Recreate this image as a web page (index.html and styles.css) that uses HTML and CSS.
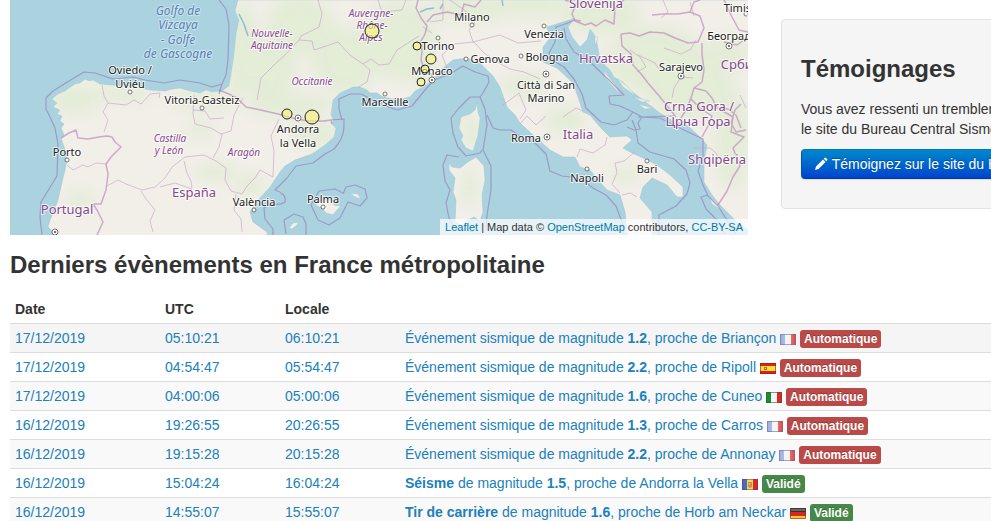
FILE: index.html
```html
<!DOCTYPE html>
<html lang="fr">
<head>
<meta charset="utf-8">
<title>Derniers évènements en France métropolitaine</title>
<link rel="stylesheet" href="styles.css">
</head>
<body>
<svg class="defs" aria-hidden="true">
  <defs>
    <linearGradient id="gloss" x1="0" y1="0" x2="1" y2="0"><stop offset="0" stop-color="#fff" stop-opacity=".1"/><stop offset=".5" stop-color="#fff" stop-opacity=".35"/><stop offset="1" stop-color="#fff" stop-opacity="0"/></linearGradient>
    <symbol id="fr" viewBox="0 0 16 11"><path fill="#8fa5dc" d="M0 0h6v11H0z"/><path fill="#f0f0f0" d="M5 0h6v11H5z"/><path fill="#e2453f" d="M11 0h5v11h-5z"/><path fill="url(#gloss)" d="M0 0h16v11H0z"/><path fill="none" stroke="#6a6f98" stroke-opacity=".6" d="M.5.5h15v10H.5z"/></symbol>
    <symbol id="es" viewBox="0 0 16 11"><path fill="#d8231c" d="M0 0h16v11H0z"/><path fill="#fbe235" d="M0 3h16v5H0z"/><path fill="#c8682e" d="M4 4h3v3H4z"/><path fill="#f5d9a0" d="M5 5h1v1H5z"/><path fill="none" stroke="#a51612" stroke-opacity=".6" d="M.5.5h15v10H.5z"/></symbol>
    <symbol id="it" viewBox="0 0 16 11"><path fill="#149032" d="M0 0h6v11H0z"/><path fill="#f6f6f6" d="M5 0h6v11H5z"/><path fill="#e22424" d="M11 0h5v11h-5z"/><path fill="none" stroke="#3a5a35" stroke-opacity=".6" d="M.5.5h15v10H.5z"/></symbol>
    <symbol id="ad" viewBox="0 0 16 11"><path fill="#4c69c4" d="M0 0h6v11H0z"/><path fill="#f5da45" d="M5 0h6v11H5z"/><path fill="#dc2430" d="M11 0h5v11h-5z"/><path fill="#c98f4e" d="M6 3h4v5l-2 1-2-1z"/><path fill="#e9c089" d="M7 4h1v2H7z"/><path fill="none" stroke="#59406a" stroke-opacity=".5" d="M.5.5h15v10H.5z"/></symbol>
    <symbol id="de" viewBox="0 0 16 11"><path fill="#333" d="M0 0h16v4H0z"/><path fill="#d9291f" d="M0 4h16v4H0z"/><path fill="#f6ca35" d="M0 8h16v3H0z"/><path fill="#fff" fill-opacity=".25" d="M1 1h14v2H1z"/><path fill="none" stroke="#6b3524" stroke-opacity=".6" d="M.5.5h15v10H.5z"/></symbol>
  </defs>
</svg>
<div class="page">
  <div class="top">
    <div class="map">
      <svg class="map-view" viewBox="10 0 738 235" role="img" aria-label="Carte des séismes">
        <defs>
          <path id="land" d="M238 0L235 11L239 20L236 35L234 55L231 75L229 86L222 91L212 92L206 90L200 93L190 91L180 88L172 89L165 91L150 90L140 88L130 86L110 85L100 84L93 80L89 81L85 79L80 83L75 84L65 91L58 94L52 99L57 103L53 107L60 110L57 114L62 116L60 121L64 124L61 128L64 135L61 138L65 150L67 158L65 170L62 182L58 200L53 213L50 220L48 227L52 231L54 240H268L267 232L253 222L250 212L258 200L270 187L280 172L285 166L295 160L312 154L325 145L334 137L336 128L331 123L334 121L331 115L333 100L340 93L353 87L360 87L367 90L370 93L377 93L383 97L397 100L410 97L415 91L423 87L433 80L443 68L453 60L467 58L480 63L493 76L500 87L507 107L515 115L520 123L533 135L550 150L563 157L575 157L580 167L590 170L598 180L607 190L620 195L625 212L628 240H652V212L640 198L643 187L652 178L667 185L677 197L683 197V187L670 175L657 165L643 158L630 152L623 148L632 140L627 136L610 137L600 127L590 115L583 112L578 97L573 83L557 68L543 62V47L550 38L547 27L563 22L575 18L568 27L572 37L580 47L587 40L590 29L594 34L597 43L600 60L610 70L614 77L623 82L630 90L643 100L660 113L673 121L687 125L700 137L707 145L704 162V182L712 195L720 205L730 215L740 225L749 230V0Z"/>
          <path id="isles" d="M477 103L478 112L480 118L478 135L473 151L466 148L461 140L463 136L459 128L461 117L470 114L475 110ZM476 157L484 166L485 180L482 195L483 212L480 221L474 217L468 220L463 226L455 222L456 200L453 192L455 178L449 170V163L452 167L460 168L468 162ZM315 205L325 199L333 200L334 205L341 206L336 211L333 215L326 213L322 208ZM350 193L358 194L361 199L355 197ZM289 228L293 223L299 222L296 226L292 229ZM595 36L598 38L595 46ZM603 70L616 86L620 94L606 79ZM617 78L628 87L636 96L623 87ZM633 97L650 101L642 102ZM638 104L653 108L645 109ZM709 197L716 202L722 211L712 204Z"/>
          <clipPath id="shore"><use href="#land"/><use href="#isles"/></clipPath>
          <filter id="soft" x="-20%" y="-20%" width="140%" height="140%"><feGaussianBlur stdDeviation="7"/></filter>
        </defs>
        <path class="sea" d="M10 0h738v235H10z"/>
        <use class="land" href="#land"/><use class="land" href="#isles"/>
        <g clip-path="url(#shore)">
          <g class="woods" filter="url(#soft)">
            <ellipse cx="75" cy="100" rx="24" ry="14"/><ellipse cx="120" cy="94" rx="34" ry="8"/><ellipse cx="205" cy="100" rx="36" ry="10"/><ellipse cx="200" cy="130" rx="14" ry="8"/><ellipse cx="242" cy="50" rx="18" ry="46"/><ellipse cx="270" cy="68" rx="28" ry="30"/><ellipse cx="290" cy="105" rx="46" ry="12"/><ellipse cx="300" cy="25" rx="34" ry="30"/><ellipse cx="345" cy="60" rx="34" ry="34"/><ellipse cx="398" cy="40" rx="38" ry="40"/><ellipse cx="425" cy="75" rx="20" ry="12"/><ellipse cx="470" cy="8" rx="46" ry="14"/><ellipse cx="530" cy="5" rx="36" ry="12"/><ellipse cx="525" cy="86" rx="24" ry="12"/><ellipse cx="565" cy="120" rx="20" ry="14"/><ellipse cx="600" cy="14" rx="40" ry="20"/><ellipse cx="655" cy="60" rx="50" ry="34"/><ellipse cx="690" cy="90" rx="45" ry="30"/><ellipse cx="732" cy="140" rx="18" ry="50"/><ellipse cx="725" cy="55" rx="26" ry="18"/><ellipse cx="315" cy="134" rx="25" ry="13"/><ellipse cx="215" cy="172" rx="22" ry="9"/><ellipse cx="250" cy="185" rx="14" ry="12"/><ellipse cx="80" cy="200" rx="14" ry="10"/><ellipse cx="470" cy="130" rx="9" ry="20"/><ellipse cx="470" cy="188" rx="8" ry="18"/><ellipse cx="625" cy="175" rx="14" ry="8"/>
          </g>
        </g>
        <path class="river" d="M239 14L244 24L248 36M420 12L427 9L434 8M440 9L443 4M502 0L503 6"/>
        <g class="region">
          <path d="M102 85L104 96L108 103L103 112L108 120L104 132M108 103L126 105L134 100L141 104L150 94L160 93L159 98M194 95L193 114L195 124L211 128L221 134L231 131L234 115L243 98M193 110L205 111L210 119L224 118M67 165L73 170L83 165L88 167L96 163L106 164M107 186L118 180L126 184L142 190L155 187L165 178L172 167L185 157L204 155L216 161L226 168L225 180L231 191L242 194L247 186M184 161L187 173L191 181L192 188M141 191L146 199L155 210L150 221L153 232M160 187L175 183L192 189M222 134L219 147L213 158M247 186L255 178L260 170L273 177M236 194L234 210L241 219L242 232M257 100L261 78L274 65L285 55L299 40L312 41L314 50L329 45L338 42L350 55L363 64M318 0L322 14L319 27L301 36L299 40M363 64L371 59L379 65L389 64L397 50L411 41L419 36M363 64L370 70L367 82L357 88M378 0L382 12L402 10L406 0M273 177L274 151L271 136L279 119M430 22L443 20V0M423 27L432 33M450 0L467 12L475 22L469 30L473 42L500 35L518 43L541 41M447 68L442 55L454 44L474 42M474 42L484 53L497 62L510 69L524 72L540 79M520 124L527 116L536 125L546 116M563 117L576 108L583 111M577 157L580 149L593 153L605 145L607 137M615 163L624 161L635 152M615 163L617 173L612 184L620 193M637 197L630 193L622 195M503 105L519 93L526 110L520 119M663 0L668 12L661 18M630 50L640 57L646 67L637 72M638 55L655 63L661 72M681 77L674 88L672 98M681 77L693 78M696 40L691 49L681 54L664 48M690 2L694 16M694 148L710 148L717 154L717 165M740 95L746 108"/>
        </g>
        <g class="state">
          <path d="M219 90L229 94L237 98L246 107L256 109L278 114L292 118L308 121L324 121L331 120L332 124M61 138L69 133L76 130L78 138L88 139L99 137L107 136L112 137L115 142L121 147L111 157L106 164L108 174L106 190L101 204H93L97 210L103 222L97 235M418 0L416 8L421 18L427 26L425 34L421 41L422 52L421 60L424 68L431 74L434 80M427 22L433 15L447 12L461 15L464 4L475 7L481 0M565 0L576 4L572 14L575 21L585 25L591 23L596 26L605 20L614 24L615 8L624 0M652 15L664 14L678 14L690 12L694 2L700 0M621 34L630 33L639 36L650 32L664 33L675 38L688 43L698 42L704 28L700 16L690 12M621 34L622 46L631 54L633 65L642 75L648 83L660 97L676 117M702 43L702 54L704 70L702 82L694 88L691 98L686 110L681 118M694 88L706 91L712 98L717 108L728 109L736 115L741 128M690 98L700 108L712 116L708 126L702 137M721 110L733 117L731 132L744 137L733 148L740 166L733 177L727 191L718 205M741 104L735 110L731 123L736 132L746 130M724 0L732 17L739 30L748 32M724 42L737 45L747 38M575 20L581 21"/>
        </g>
        <g class="maritime">
          <path d="M219 0L226 9L229 25L228 60L226 75L222 84L212 87L200 83L180 80L164 83L145 80L133 77L113 79L95 73L84 72L69 81L53 91L46 98L46 109L49 115L55 128L58 144L57 176L41 202L40 217L42 235M222 84L219 94M331 120L344 119V126Q344 138 334 149L325 154L313 163L296 166L287 178L275 190Q287 194 285 202Q280 206 273 203L264 208L265 219L273 229V235M342 120L339 109L339 99L350 94L361 94L383 105L397 110L412 106L425 90L434 80L450 74L463 66L475 72L488 76L489 82L483 93L480 97L485 109L487 125L483 150L491 166L491 190L487 215L486 230M481 97L470 97L459 108L451 118L453 133L458 147L466 156L480 153L482 150M459 157L447 155L443 165L445 181L450 190L446 203L449 218L454 228L474 232M487 115L493 128L500 130L511 130L524 139L535 143L546 154L550 171L562 176L580 178L593 188L606 195L616 206L622 222L624 235M343 193L335 189L319 191L311 205L318 220L329 225L340 218L348 202L360 206L367 198L365 189L355 185L346 187L343 194M286 234L284 220L294 214L303 217L306 224V235M575 20L565 24L556 27L555 42L549 53L552 60L564 67L574 79L582 94L586 108L601 122L614 125L627 120L633 112L620 106L610 104L609 96L624 95L611 82L589 61L574 52L566 39L564 28M633 112L642 117L638 123L640 129L634 130L627 127M640 117L674 116M632 120L636 130L638 143L650 152L674 159L686 170L690 183L687 194L676 206L659 215V235M638 117L660 118L684 130L703 139V156L698 171L703 185L708 196L718 206L736 234M708 195L701 197L706 209L719 222L725 234"/>
        </g>
        <g class="place">
          <circle cx="130" cy="92" r="2"/><circle cx="202" cy="108" r="2"/><circle cx="67" cy="160" r="2"/><circle cx="385" cy="94" r="2"/><circle cx="438" cy="38" r="2"/><circle cx="472" cy="25" r="2"/><circle cx="466" cy="59" r="2"/><circle cx="521" cy="56" r="2"/><circle cx="544" cy="26" r="2"/><circle cx="587" cy="169" r="2"/><circle cx="647" cy="161" r="2"/><circle cx="254" cy="210" r="2"/><circle cx="323" cy="207" r="2"/><circle cx="746" cy="14" r="2"/>
          <circle cx="55" cy="232" r="3"/><circle cx="298" cy="118" r="3"/><circle cx="432" cy="80" r="3"/><circle cx="546" cy="74" r="3"/><circle cx="547" cy="137" r="3"/><circle cx="681" cy="76" r="3"/><circle cx="729" cy="46" r="3"/>
        </g>
        <g class="place-dot"><circle cx="55" cy="232" r="1"/><circle cx="298" cy="118" r="1"/><circle cx="432" cy="80" r="1"/><circle cx="546" cy="74" r="1"/><circle cx="547" cy="137" r="1"/><circle cx="681" cy="76" r="1"/><circle cx="729" cy="46" r="1"/></g>
        <g class="label water">
          <text x="178" y="15">Golfo de</text><text x="178" y="29">Vizcaya</text><text x="178" y="44">- Golfe</text><text x="178" y="58">de Gascogne</text>
        </g>
        <g class="label area">
          <text x="272" y="37">Nouvelle-</text><text x="272" y="49">Aquitaine</text><text x="371" y="17">Auvergne-</text><text x="372" y="29">Rhône-</text><text x="371" y="41">Alpes</text><text x="312" y="85">Occitanie</text><text x="170" y="142">Castilla</text><text x="169" y="154">y León</text><text x="244" y="156">Aragón</text>
        </g>
        <g class="label country">
          <text x="596" y="8">Slovenija</text><text x="606" y="63">Hrvatska</text><text x="742" y="69">Србија</text><text x="699" y="111">Crna Gora /</text><text x="698" y="126">Црна Гора</text><text x="717" y="164">Shqipëria</text><text x="578" y="139">Italia</text><text x="194" y="197">España</text><text x="67" y="214">Portugal</text>
        </g>
        <g class="label city">
          <text x="130" y="74">Oviedo /</text><text x="130" y="88">Uviéu</text><text x="202" y="104">Vitoria-Gasteiz</text><text x="67" y="156">Porto</text><text x="298" y="133">Andorra</text><text x="298" y="147">la Vella</text><text x="254" y="206">València</text><text x="323" y="203">Palma</text><text x="385" y="106">Marseille</text><text x="432" y="75">Monaco</text><text x="438" y="50">Torino</text><text x="472" y="21">Milano</text><text x="490" y="63">Genova</text><text x="544" y="38">Venezia</text><text x="547" y="61">Bologna</text><text x="546" y="89">Città di San</text><text x="546" y="102">Marino</text><text x="526" y="142">Roma</text><text x="587" y="182">Napoli</text><text x="647" y="173">Bari</text><text x="681" y="71">Sarajevo</text><text x="729" y="40">Београд</text><text x="749" y="12">Timișoara</text>
        </g>
        <g class="quake">
          <circle cx="372" cy="31" r="7"/><circle cx="417" cy="46" r="4"/><circle cx="431" cy="59" r="5"/><circle cx="425" cy="69" r="4"/><circle cx="421" cy="82" r="4"/><circle cx="287" cy="114" r="5"/><circle cx="312" cy="117" r="7"/>
        </g>
      </svg>
      <div class="credit"><a href="#">Leaflet</a> | Map data © <a href="#">OpenStreetMap</a> contributors, <a href="#">CC-BY-SA</a></div>
    </div>
    <aside class="well">
      <h3>Témoignages</h3>
      <p>Vous avez ressenti un tremblement de terre ?<br>le site du Bureau Central Sismologique Français</p>
      <a class="btn" href="#"><svg class="pencil" viewBox="0 0 14 14" aria-hidden="true"><path d="M1 13L2 9.500L9 2.500L11.500 5L4.500 12ZM9.800 1.700L10.700.8Q11.300.3 11.900.9L13.100 2.100Q13.700 2.700 13.100 3.300L12.300 4.200Z"/></svg> Témoignez sur le site du BCSF</a>
    </aside>
  </div>
  <h3>Derniers évènements en France métropolitaine</h3>
  <table>
    <colgroup><col class="c-date"><col class="c-time"><col class="c-time"><col></colgroup>
    <thead><tr><th>Date</th><th>UTC</th><th>Locale</th><th></th></tr></thead>
    <tbody>
      <tr class="active"><td><a href="#">17/12/2019</a></td><td><a href="#">05:10:21</a></td><td><a href="#">06:10:21</a></td><td><a href="#">Événement sismique de magnitude <b>1.2</b>, proche de Briançon</a> <svg class="flag"><use href="#fr"/></svg> <span class="tag auto">Automatique</span></td></tr>
      <tr><td><a href="#">17/12/2019</a></td><td><a href="#">04:54:47</a></td><td><a href="#">05:54:47</a></td><td><a href="#">Événement sismique de magnitude <b>2.2</b>, proche de Ripoll</a> <svg class="flag"><use href="#es"/></svg> <span class="tag auto">Automatique</span></td></tr>
      <tr><td><a href="#">17/12/2019</a></td><td><a href="#">04:00:06</a></td><td><a href="#">05:00:06</a></td><td><a href="#">Événement sismique de magnitude <b>1.6</b>, proche de Cuneo</a> <svg class="flag"><use href="#it"/></svg> <span class="tag auto">Automatique</span></td></tr>
      <tr><td><a href="#">16/12/2019</a></td><td><a href="#">19:26:55</a></td><td><a href="#">20:26:55</a></td><td><a href="#">Événement sismique de magnitude <b>1.3</b>, proche de Carros</a> <svg class="flag"><use href="#fr"/></svg> <span class="tag auto">Automatique</span></td></tr>
      <tr><td><a href="#">16/12/2019</a></td><td><a href="#">19:15:28</a></td><td><a href="#">20:15:28</a></td><td><a href="#">Événement sismique de magnitude <b>2.2</b>, proche de Annonay</a> <svg class="flag"><use href="#fr"/></svg> <span class="tag auto">Automatique</span></td></tr>
      <tr><td><a href="#">16/12/2019</a></td><td><a href="#">15:04:24</a></td><td><a href="#">16:04:24</a></td><td><a href="#"><b>Séisme</b> de magnitude <b>1.5</b>, proche de Andorra la Vella</a> <svg class="flag"><use href="#ad"/></svg> <span class="tag valid">Validé</span></td></tr>
      <tr><td><a href="#">16/12/2019</a></td><td><a href="#">14:55:07</a></td><td><a href="#">15:55:07</a></td><td><a href="#"><b>Tir de carrière</b> de magnitude <b>1.6</b>, proche de Horb am Neckar</a> <svg class="flag"><use href="#de"/></svg> <span class="tag valid">Validé</span></td></tr>
    </tbody>
  </table>
</div>
</body>
</html>
```
FILE: styles.css
```css
html { overflow-x: hidden; }
body {
  margin: 0;
  background: #fff;
  color: #333;
  font: 14px/20px "Liberation Sans", Arial, sans-serif;
}
a { color: #2080bb; text-decoration: none; }
.defs { position: absolute; width: 0; height: 0; }
.page { min-width: 1140px; padding: 0 10px; }
.top {
  display: grid;
  grid-template-columns: 2fr 1fr;
  gap: 33px;
  align-items: start;
}
h3 { margin: 10px 0; font-size: 24px; line-height: 40px; }
p { margin: 0 0 10px; }

/* Map */
.map { position: relative; }
.map-view { display: block; width: 100%; }
.sea { fill: #aad3df; }
.land { fill: #f2efe9; stroke: #9fc3d0; stroke-width: .5; }
.woods { fill: #dcebcd; opacity: .65; }
.river { fill: none; stroke: #8fbadb; stroke-width: 1.5; }
.region, .state, .maritime { fill: none; stroke-linejoin: round; }
.region { stroke: #c9a3c9; stroke-opacity: .65; stroke-width: 1; }
.state { stroke: #c093c2; stroke-opacity: .75; stroke-width: 1.5; }
.maritime { stroke: #9a86bf; stroke-opacity: .75; stroke-width: 1.2; }
.place { fill: #fff; stroke: #555; stroke-width: .8; }
.place-dot { fill: #444; }
.label {
  font-family: "Noto Sans", sans-serif;
  text-anchor: middle;
  paint-order: stroke;
  stroke: #fff;
  stroke-opacity: .75;
  stroke-width: 2px;
  stroke-linejoin: round;
}
.city { font-size: 11px; fill: #222; }
.water { font-size: 12px; font-style: italic; fill: #5a7fb5; stroke-opacity: .4; }
.area { font-size: 10px; font-style: italic; fill: #88498f; }
.country { font-size: 13px; fill: #84478c; }
.quake { fill: #f8f470; fill-opacity: .55; stroke: #222; stroke-width: 1; }
.credit {
  position: absolute;
  right: 0;
  bottom: 0;
  padding: 0 5px;
  background: rgba(255, 255, 255, .7);
  font-size: 11px;
  line-height: 16px;
}
.credit a { color: #0078a8; }

/* Side panel */
.well {
  margin-top: 19px;
  padding: 19px 19px 29px;
  border: 1px solid #e3e3e3;
  border-radius: 4px;
  background: #f5f5f5;
  white-space: nowrap;
}
.btn {
  display: inline-block;
  box-sizing: border-box;
  height: 30px;
  padding: 4px 12px;
  border: 1px solid #0057b8;
  border-color: #0074bd #0052b5 #003a9e;
  border-radius: 4px;
  background: linear-gradient(#08c, #04c);
  box-shadow: 0 1px 2px rgba(0, 0, 0, .1);
  color: #fff;
  text-shadow: 0 -1px 0 rgba(0, 0, 0, .25);
  vertical-align: top;
}
.pencil { width: 14px; height: 14px; fill: #fff; vertical-align: -2px; }

/* Events */
table { width: 100%; border-collapse: collapse; table-layout: fixed; }
.c-date { width: 150px; }
.c-time { width: 120px; }
th, td { padding: 4px 5px; text-align: left; }
td { border-top: 1px solid #ddd; white-space: nowrap; }
tbody tr:nth-child(odd) { background: #f9f9f9; }
tbody tr.active { background: #f5f5f5; }
.flag { width: 16px; height: 11px; vertical-align: -2px; }
.tag {
  display: inline-block;
  padding: 2px 4px;
  border-radius: 3px;
  color: #fff;
  font-size: 12px;
  font-weight: bold;
  line-height: 14px;
  text-shadow: 0 -1px 0 rgba(0, 0, 0, .25);
  vertical-align: baseline;
}
.auto { background: #b94a48; }
.valid { background: #468847; }
```
